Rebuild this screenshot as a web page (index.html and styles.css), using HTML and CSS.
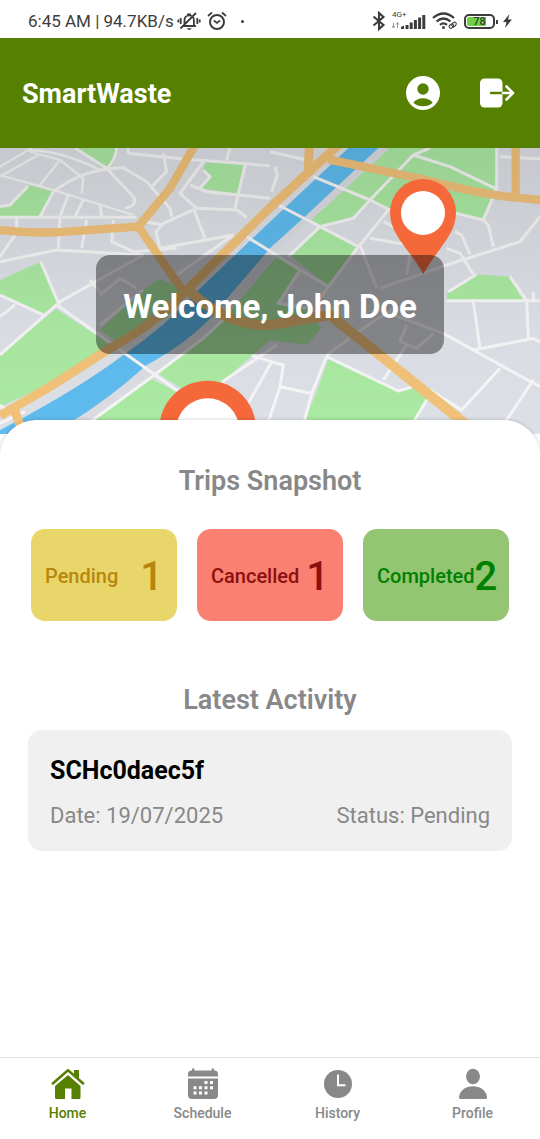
FILE: index.html
```html
<!DOCTYPE html>
<html lang="en">
<head>
<meta charset="utf-8">
<meta name="viewport" content="width=device-width, initial-scale=1">
<title>SmartWaste</title>
<link rel="stylesheet" href="styles.css">
</head>
<body>
<div class="status">
  <div class="status-side">
    <span>6:45 AM | 94.7KB/s</span>
    <svg class="st-bell" width="24" height="20" viewBox="0 0 24 20" fill="none" stroke="#3c3c3c" stroke-width="1.8">
      <path d="M6 15h12M7.500 14.500V9a4.700 4.700 0 0 1 9.400 0v5l2 1.500M3.500 17.500L19 2M10 3.500h4"/><path d="M9.500 17.300h5.500l-2.700 2z" fill="#3c3c3c" stroke="none"/><path d="M3.700 7v6M1.300 8.500v3M20.300 7v6M22.700 8.500v3"/>
    </svg>
    <svg width="20" height="20" viewBox="0 0 20 20" fill="none" stroke="#3c3c3c" stroke-width="2">
      <circle cx="10" cy="11" r="7"/><path d="M1 5l4-3.500M19 5l-4-3.500M6.800 9.500l3.200 2.500 3-2.500" stroke-width="1.700"/>
    </svg>
    <span class="dot"></span>
  </div>
  <div class="status-side status-right">
    <svg width="14" height="20" viewBox="0 0 14 20" fill="none" stroke="#3c3c3c" stroke-width="2.100"><path d="M1.500 5.500l10 8.500L7 18V2l4.500 4-10 8.500"/></svg>
    <span class="signal">
      <span class="net">4G+</span>
      <svg width="34" height="20" viewBox="0 0 34 20" fill="#3c3c3c">
        <path d="M9 18v-2l3-1.500V18zM13.500 18v-4h3v4zM17.700 18v-6.500h3V18zM21.900 18V9h3v9zM26.100 18V6.500h3V18zM30.300 18V4h3v14z"/>
        <path d="M1.500 11.500v5M0 15l1.500 2L3 15M5.500 17v-5M4 13.500l1.500-2 1.500 2" fill="none" stroke="#999"/>
      </svg>
    </span>
    <svg width="26" height="20" viewBox="0 0 26 20" fill="none" stroke="#3c3c3c" stroke-width="2.200">
      <path d="M1 7q10.500-9 21 0M4.500 10.500q7-6 14 0M8 13.800q3.500-3 7 0"/><circle cx="11.500" cy="16.500" r="1.500" fill="#3c3c3c" stroke="none"/>
      <g stroke-width="1.100"><rect x="17" y="13.800" width="5" height="3.400" rx="1.700" transform="rotate(-45 19 15.500)"/><rect x="19.500" y="11.800" width="5" height="3.400" rx="1.700" transform="rotate(-45 22 13.500)"/></g>
    </svg>
    <span class="battery"><span class="battery-level">78</span></span>
    <svg class="bolt" width="9" height="14" viewBox="0 0 9 14" fill="#3c3c3c"><path d="M6.500 0L0 8h3.500L2 14l7-8.500H5z"/></svg>
  </div>
</div>

<header class="topbar">
  <h1 class="brand">SmartWaste</h1>
  <div class="actions">
    <button class="icon-btn" type="button" aria-label="Account">
      <svg width="36" height="36" viewBox="0 0 36 36"><circle cx="18" cy="18" r="17" fill="#fff"/><circle cx="18" cy="14" r="5.700" fill="#558000"/><path d="M8.300 27.700C12 21.700 24 21.700 27.700 27.700 23 32.500 13 32.500 8.300 27.700z" fill="#558000"/></svg>
    </button>
    <button class="icon-btn" type="button" aria-label="Log out">
      <svg width="36" height="36" viewBox="0 0 36 36" fill="none" stroke-linecap="round" stroke-linejoin="round"><rect x="1" y="3.500" width="22.500" height="29" rx="4.500" fill="#fff"/><path d="M12 18h11.500" stroke="#558000" stroke-width="2.400"/><path d="M24 18h10M27.500 11.500L34 18l-6.500 6.500" stroke="#fff" stroke-width="2.600"/></svg>
    </button>
  </div>
</header>

<section class="hero">
  <svg class="map" viewBox="0 9 1620 858" preserveAspectRatio="xMidYMid slice" aria-hidden="true">
    <defs>
      <linearGradient id="shade" x1="0" y1="0" x2="0" y2="1"><stop offset="0" stop-opacity=".11"/><stop offset=".65" stop-opacity=".02"/><stop offset="1" stop-opacity="0"/></linearGradient>
    </defs>
    <rect y="0" width="1620" height="880" fill="#dde0e6"/>
    <g fill="#abeaa3">
      <path d="M220 0H350Q350 45 335 68L300 65Q265 30 220 9z"/>
      <path d="M85 120L160 140 122 213H0V187L25 182z"/>
      <path d="M620 50L735 60 715 147 600 130 628 95 608 75z"/>
      <path d="M0 405L122 350 178 472 133 508 0 448z"/>
      <path d="M168 492L335 600Q200 700 0 785V628z"/>
      <path d="M430 435L475 402 530 420 560 440 500 520 350 590 300 555z"/>
      <path d="M830 335L895 372 830 475 920 490 965 550 920 600 810 585 665 712 560 740 465 680 610 575 690 500z"/>
      <path d="M450 700L560 755 500 850H240z"/>
      <path d="M960 248L1070 305 982 420 872 332z"/>
      <path d="M1140 0H1490V125L1450 225 1360 200 1160 190 1110 165 1060 215 960 240 915 212z"/>
      <path d="M1340 465V445L1430 388 1530 395 1568 465z"/>
      <path d="M985 640L1195 738 1240 725 1282 762 1240 850H905L950 740z"/>
    </g>
    <path d="M1155 0L925 210 815 310 705 450Q610 570 460 670 340 770 230 840" fill="none" stroke="#dbdde3" stroke-width="34"/>
    <path d="M1055 0H1145L920 210 810 310 690 450Q600 575 440 660 330 760 200 840L0 890V855L75 815Q250 720 370 630 500 540 590 440L810 230z" fill="#5fbcef"/>
    <g fill="none" stroke="#f6f6f7" stroke-width="9" stroke-linejoin="round">
      <path d="M0 65L95 9M90 20L180 45 250 100 245 145M180 45L120 120M80 15Q180 15 300 75M115 30L0 95M0 90L160 135 400 210" stroke-width="7"/>
      <path d="M160 140Q250 70 370 68L440 110 510 190 515 215M320 70L400 155Q415 180 375 190M225 9L320 70Q345 50 350 9"/>
      <path d="M385 0V25L550 42 810 62M490 25L500 80 455 125M690 9L680 45M610 50L540 145 590 190 710 195 740 217M570 120L620 140 810 160M735 60L705 190M610 75L630 95 600 130"/>
      <path d="M590 190L490 235 468 260 480 310 700 270M580 190L615 280M700 270L530 390M435 230L490 240"/>
      <path d="M0 217H410M160 140L120 215M205 150L180 215 175 310M250 165L225 215M260 225L245 310M300 175L305 215M340 225L335 290 400 320 530 310M50 215V250M45 270L0 335M0 350L170 315 430 330"/>
      <path d="M0 185L30 180 85 122M122 350L178 480M430 330L180 470 0 630M270 405L300 440M168 478L550 750M0 450L135 512M45 480L0 515"/>
      <path d="M265 835L450 700 610 580 690 505M300 450L360 400 410 430M300 540L430 435"/>
      <path d="M835 180L960 245 1075 305 960 460M940 95L1110 165 1170 195M740 275L805 315 900 375 985 425M900 375L835 475 920 490"/>
      <path d="M1290 9L1240 30 1110 165 1060 220 960 245 865 335M1240 30L1350 65 1485 130M1490 9V130L1450 225 1360 203M1450 225L1465 240 1480 305M1500 35L1620 42M810 20L920 45M825 65L832 90 815 140"/>
      <path d="M1620 215L1560 290 1340 360 1140 430M1165 195L1080 300 1130 430M1150 230L1180 245M1110 280L1210 297M1365 260L1385 270 1410 328M1340 310L1380 325 1420 388M1230 330L1220 390"/>
      <path d="M1340 467H1620M1345 440L1430 388M1530 395L1580 467 1585 580M1420 470L1440 610M1420 615L1600 580 1620 590M1140 495L1330 565 1510 665 1620 725M1500 670L1385 795 1290 735M1600 705L1510 840"/>
      <path d="M980 635L1195 738 1240 725M980 635L935 745 910 840M840 725L930 745M810 650L850 660 840 725 805 830M1282 762L1235 840M1220 600L1150 705M1220 540L1200 590 1250 610 1300 565M980 630L1090 550 1180 490M830 600L665 712M755 632L815 650 745 775M1600 440V467"/>
      <path d="M0 835L75 800M0 780L15 795"/>
    </g>
    <g fill="none" stroke="#f2c27a" stroke-width="25" stroke-linejoin="round">
      <path d="M0 255Q100 267 200 260L415 245M585 0L510 130 415 245 550 440"/>
      <path d="M1015 0L810 188 555 440Q460 540 330 610L150 725 0 812M928 0L925 80M40 785L60 840" stroke-width="27"/>
      <path d="M985 43L1280 105Q1450 150 1550 158L1620 165M1547 0V158"/>
      <path d="M560 430Q680 545 810 540L990 510 1400 840" stroke-width="30"/>
    </g>
    <rect width="1620" height="880" fill="url(#shade)"/>
    <path d="M1270 388C1232 315 1170 270 1170 203A99 101 0 0 1 1368 203C1368 270 1308 315 1270 388z" fill="#f4683a"/>
    <circle cx="1269" cy="204" r="66" fill="#fff"/>
    <circle cx="623" cy="852" r="145" fill="#f4683a"/><circle cx="623" cy="855" r="95" fill="#fff"/>
  </svg>
  <p class="welcome">Welcome, John Doe</p>
</section>

<main class="sheet">
  <h2 class="heading">Trips Snapshot</h2>
  <div class="tiles">
    <div class="tile pending"><span>Pending</span><strong class="count">1</strong></div>
    <div class="tile cancelled"><span>Cancelled</span><strong class="count">1</strong></div>
    <div class="tile completed"><span>Completed</span><strong class="count">2</strong></div>
  </div>
  <h2 class="heading">Latest Activity</h2>
  <article class="activity">
    <h3 class="activity-id">SCHc0daec5f</h3>
    <div class="activity-row"><span>Date: 19/07/2025</span><span>Status: Pending</span></div>
  </article>
</main>

<nav class="tabs">
  <a class="tab active" href="#home">
    <svg width="34" height="32" viewBox="0 0 34 32" fill="currentColor"><path d="M17 7L4 18v11.500Q4 31 5.500 31H14V20.500h6.500V31H28q1.500 0 1.500-1.500V18z"/><path d="M2 16L17 3l15 13" fill="none" stroke="#fff" stroke-width="5"/><path d="M23 2h5v9.500l-5-4.500z"/><path d="M1.800 15.500L17 2.300l15.200 13.200" fill="none" stroke="currentColor" stroke-width="2.500" stroke-linecap="round" stroke-linejoin="round"/></svg>
    <span>Home</span>
  </a>
  <a class="tab" href="#schedule">
    <svg width="32" height="32" viewBox="0 0 32 32" fill="currentColor"><path d="M1 8.500V6q0-3.500 3.500-3.500H5V1.500a1.200 1.200 0 0 1 2.400 0v1h17.200v-1a1.200 1.200 0 0 1 2.400 0v1h.5Q31 2.500 31 6v2.500zM1 10.500h30V27q0 4-4 4H5q-4 0-4-4z"/><path fill="#fff" d="M17.500 13h3v3h-3zM23 13h3v3h-3zM6.500 18.300h3v3h-3zM12 18.300h3v3h-3zM17.500 18.300h3v3h-3zM23 18.300h3v3h-3zM6.500 23.600h3v3h-3zM12 23.600h3v3h-3zM17.500 23.600h3v3h-3z"/></svg>
    <span>Schedule</span>
  </a>
  <a class="tab" href="#history">
    <svg width="32" height="32" viewBox="0 0 32 32"><circle cx="16" cy="16" r="14" fill="currentColor"/><path d="M16 6.500V17.300h7.500" fill="none" stroke="#fff" stroke-width="2"/></svg>
    <span>History</span>
  </a>
  <a class="tab" href="#profile">
    <svg width="32" height="32" viewBox="0 0 32 32" fill="currentColor"><ellipse cx="16" cy="8.500" rx="7" ry="7.700"/><path d="M2 29.500C3 14.500 29 14.500 30 29.500Q30 31 28.500 31h-25Q2 31 2 29.500z"/></svg>
    <span>Profile</span>
  </a>
</nav>
</body>
</html>
```
FILE: styles.css
```css
* { box-sizing: border-box; }

body {
  margin: 0;
  min-height: 100vh;
  display: flex;
  flex-direction: column;
  background: #fff;
  font-family: Roboto, "Liberation Sans", sans-serif;
}

h1, h2, h3, p { margin: 0; }
svg { display: block; flex: none; }

.status {
  display: flex;
  justify-content: space-between;
  height: 38px;
  padding: 4px 28px 0;
  color: #3c3c3c;
  font-size: 17px;
}
.status-side { display: flex; align-items: center; gap: 8px; }
.status-right { gap: 6px; }
.st-bell { margin: 0 -2px 0 -5px; }
.dot { width: 3px; height: 3px; margin-left: 6px; border-radius: 50%; background: #3c3c3c; }
.signal { position: relative; }
.net { position: absolute; top: 0; left: 0; font-size: 8px; line-height: 8px; }
.battery {
  position: relative;
  width: 31px;
  height: 15px;
  margin-right: 2px;
  padding: 1px;
  border: 2px solid #3c3c3c;
  border-radius: 5px;
}
.battery::after {
  content: "";
  position: absolute;
  top: 4px;
  right: -5px;
  width: 2px;
  height: 4px;
  background: #3c3c3c;
}
.battery-level {
  display: block;
  border-radius: 2px;
  background: linear-gradient(90deg, #6fd143 78%, #fff 78%);
  font-size: 11px;
  font-weight: 500;
  line-height: 9px;
  text-align: center;
}

.topbar {
  display: flex;
  align-items: center;
  justify-content: space-between;
  height: 110px;
  padding: 0 25px 0 22px;
  background: #558000;
  color: #fff;
}
.brand { padding-top: 2px; font-size: 27px; font-weight: 700; line-height: 36px; }
.actions { display: flex; gap: 38px; }
.icon-btn { padding: 0; border: 0; background: none; cursor: pointer; }

.hero { display: grid; place-items: center; height: 286px; background: #dde0e6; }
.map { grid-area: 1 / 1; width: 100%; height: 286px; }
.welcome {
  z-index: 1;
  grid-area: 1 / 1;
  margin-bottom: -26px;
  padding: 30px 27px 26px;
  border-radius: 14px;
  background: rgba(0, 0, 0, .4);
  color: #fff;
  font-size: 33px;
  font-weight: 700;
  line-height: 43px;
}

.sheet {
  z-index: 1;
  flex: 1;
  margin-top: -14px;
  padding: 43px 28px 24px;
  border-radius: 36px 36px 0 0;
  background: #fff;
  box-shadow: 0 0 4px rgba(0, 0, 0, .2);
}
.heading {
  color: #888;
  font-size: 27px;
  font-weight: 600;
  line-height: 36px;
  text-align: center;
}
.tiles {
  display: grid;
  grid-template-columns: repeat(3, minmax(0, 1fr));
  gap: 20px;
  margin: 30px 3px 61px;
}
.tile {
  display: flex;
  align-items: center;
  justify-content: space-between;
  height: 92px;
  padding: 2px 14px 0;
  border-radius: 14px;
  font-size: 20px;
  font-weight: 500;
}
.count { font-size: 40px; font-weight: 500; }
.pending { background: #e9d66b; color: #b8860b; }
.cancelled { background: #fa8072; color: #8b1010; }
.completed { background: #93c572; color: #008000; }

.activity {
  margin-top: 12px;
  padding: 23px 22px 21px;
  border-radius: 14px;
  background: #f0f0f0;
}
.activity-id { font-size: 25px; font-weight: 700; line-height: 36px; }
.activity-row {
  display: flex;
  justify-content: space-between;
  margin-top: 12px;
  color: #888;
  font-size: 22px;
  line-height: 29px;
}

.tabs {
  z-index: 2;
  display: grid;
  grid-template-columns: repeat(4, 1fr);
  height: 82px;
  padding-top: 10px;
  border-top: 1px solid #e2e2e2;
  background: #fff;
}
.tab {
  display: flex;
  flex-direction: column;
  align-items: center;
  gap: 3px;
  color: #888;
  font-size: 14px;
  font-weight: 500;
  line-height: 20px;
  text-decoration: none;
}
.active { color: #558000; }
```
